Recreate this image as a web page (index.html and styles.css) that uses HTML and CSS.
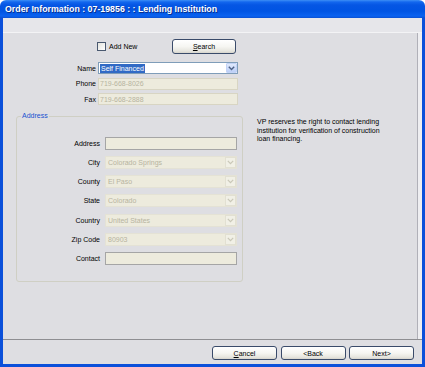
FILE: index.html
```html
<!DOCTYPE html>
<html>
<head>
<meta charset="utf-8">
<link rel="stylesheet" href="styles.css">
</head>
<body>
<div class="window">
  <div class="titlebar"><span class="title">Order Information : 07-19856 : : Lending Institution</span></div>
  <div class="frame">
    <div class="band"></div>
    <div class="content">
      <div class="top-form">
        <span></span>
        <div class="toprow">
          <label class="check"><span class="box"></span>Add New</label>
          <button class="btn search"><u>S</u>earch</button>
        </div>
        <span class="lbl">Name</span>
        <div class="combo active">
          <span class="sel">Self Financed</span>
          <span class="drop"><svg width="7" height="5" viewBox="0 0 7 5"><polyline points="0.8,0.8 3.5,3.6 6.2,0.8" fill="none" stroke="#4d6185" stroke-width="1.4"/></svg></span>
        </div>
        <span class="lbl">Phone</span>
        <div class="field dis">719-668-8026</div>
        <span class="lbl">Fax</span>
        <div class="field dis">719-668-2888</div>
      </div>
      <div class="lower">
        <fieldset class="group">
          <legend>Address</legend>
          <div class="group-grid">
            <span class="lbl">Address</span>
            <div class="field edit"></div>
            <span class="lbl">City</span>
            <div class="combo dis"><span class="val">Colorado Springs</span><span class="drop"><svg width="7" height="5" viewBox="0 0 7 5"><polyline points="0.8,0.8 3.5,3.6 6.2,0.8" fill="none" stroke="#c9c7b8" stroke-width="1.2"/></svg></span></div>
            <span class="lbl">County</span>
            <div class="combo dis"><span class="val">El Paso</span><span class="drop"><svg width="7" height="5" viewBox="0 0 7 5"><polyline points="0.8,0.8 3.5,3.6 6.2,0.8" fill="none" stroke="#c9c7b8" stroke-width="1.2"/></svg></span></div>
            <span class="lbl">State</span>
            <div class="combo dis"><span class="val">Colorado</span><span class="drop"><svg width="7" height="5" viewBox="0 0 7 5"><polyline points="0.8,0.8 3.5,3.6 6.2,0.8" fill="none" stroke="#c9c7b8" stroke-width="1.2"/></svg></span></div>
            <span class="lbl">Country</span>
            <div class="combo dis"><span class="val">United States</span><span class="drop"><svg width="7" height="5" viewBox="0 0 7 5"><polyline points="0.8,0.8 3.5,3.6 6.2,0.8" fill="none" stroke="#c9c7b8" stroke-width="1.2"/></svg></span></div>
            <span class="lbl">Zip Code</span>
            <div class="combo dis"><span class="val">80903</span><span class="drop"><svg width="7" height="5" viewBox="0 0 7 5"><polyline points="0.8,0.8 3.5,3.6 6.2,0.8" fill="none" stroke="#c9c7b8" stroke-width="1.2"/></svg></span></div>
            <span class="lbl">Contact</span>
            <div class="field edit"></div>
          </div>
        </fieldset>
        <p class="note">VP reserves the right to contact lending<br>institution for verification of construction<br>loan financing.</p>
      </div>
    </div>
    <div class="footer">
      <button class="btn"><u>C</u>ancel</button>
      <button class="btn">&lt;Back</button>
      <button class="btn">Next&gt;</button>
    </div>
  </div>
</div>
</body>
</html>
```

FILE: styles.css
```css
html, body {
  margin: 0;
  padding: 0;
}
body {
  width: 425px;
  height: 367px;
  overflow: hidden;
  font-family: "Liberation Sans", Arial, sans-serif;
  font-size: 7px;
  color: #000;
  background: #fff;
}
.window {
  width: 425px;
  height: 367px;
  display: flex;
  flex-direction: column;
}
.titlebar {
  height: 18px;
  flex: none;
  border-radius: 6px 6px 0 0;
  background: linear-gradient(180deg, #3d8ff5 0px, #1367ee 2px, #0556e4 5px, #0054e3 11px, #0a62f0 16px, #0a50d2 18px);
  display: flex;
  align-items: center;
  padding-left: 5px;
}
.title {
  color: #fff;
  font-weight: bold;
  font-size: 8.8px;
  text-shadow: 1px 1px 0 #0a2f8c;
  white-space: nowrap;
}
.frame {
  flex: 1;
  display: flex;
  flex-direction: column;
  border: 3px solid #0b50da;
  border-top: 0;
  background: #eeeef1;
  min-height: 0;
}
.band {
  height: 14px;
  flex: none;
  background: #e6e6ea;
  border-bottom: 1px solid #f3f3f5;
}
.content {
  flex: 1;
  background: #dedee2;
  margin-right: 4px;
  border-right: 1px solid #b0b0b8;
  padding-top: 6px;
  min-height: 0;
}
.top-form {
  display: grid;
  grid-template-columns: 93px 140px;
  grid-template-rows: 19.5px 12px 12px 12px;
  column-gap: 2px;
  row-gap: 3.5px;
  align-items: center;
}
.toprow {
  align-self: start;
  display: flex;
  align-items: center;
  justify-content: space-between;
  height: 15px;
  padding-right: 2px;
}
.check {
  display: flex;
  align-items: center;
  gap: 3px;
  margin-left: -1px;
}
.box {
  width: 7px;
  height: 7px;
  border: 1px solid #4a5970;
  background: linear-gradient(135deg, #e4e4de, #ffffff);
}
.lbl {
  text-align: right;
  white-space: nowrap;
}
.btn {
  font-family: "Liberation Sans", Arial, sans-serif;
  font-size: 7px;
  color: #000;
  width: 65px;
  height: 14px;
  padding: 0;
  border: 1px solid #3a4b6a;
  border-radius: 3px;
  background: linear-gradient(180deg, #ffffff 0%, #f6f6f2 50%, #e6e5de 85%, #d6d4cc 100%);
  box-sizing: border-box;
}
.search {
  width: 64px;
  height: 15px;
}
.combo, .field {
  height: 12px;
  box-sizing: border-box;
  display: flex;
  align-items: center;
  position: relative;
  white-space: nowrap;
}
.combo.active {
  background: #fff;
  border: 1px solid #7f9db9;
}
.sel {
  background: #316ac5;
  color: #fff;
  margin-left: 1px;
  padding: 0 1px;
  line-height: 9px;
}
.drop {
  margin-left: auto;
  width: 11px;
  height: 100%;
  display: flex;
  align-items: center;
  justify-content: center;
  box-sizing: border-box;
}
.combo.active .drop {
  background: linear-gradient(180deg, #e0e9fc, #bccff7);
  border: 1px solid #c3d3f6;
  border-radius: 1px;
}
.field.dis {
  background: #edebdd;
  border: 1px solid #d8d5c3;
  color: #b7b49f;
  padding-left: 1px;
}
.lower {
  display: flex;
  align-items: flex-start;
  margin-top: 7px;
}
.group {
  margin: 0 0 0 13px;
  width: 227px;
  box-sizing: border-box;
  border: 1px solid #cfcfc4;
  border-radius: 3px;
  padding: 17px 4px 16px 0;
  min-width: 0;
}
.group legend {
  color: #1750d0;
  font-size: 7px;
  line-height: 8px;
  padding: 0 1px;
  margin-left: 4px;
}
.group-grid {
  display: grid;
  grid-template-columns: 83px 132px;
  grid-auto-rows: 13px;
  column-gap: 5px;
  row-gap: 6.17px;
  align-items: center;
}
.group-grid .combo, .group-grid .field {
  height: 13px;
}
.field.edit {
  background: #edebdd;
  border: 1px solid #a5a5a5;
}
.combo.dis {
  background: #edebdd;
  border: 1px solid #e4e2d5;
  color: #b7b49f;
}
.combo.dis .val {
  padding-left: 2px;
}
.combo.dis .drop {
  border: 1px solid #e2e0d2;
  background: #f1f0e6;
}
.note {
  margin: 6px 0 0 14px;
  line-height: 8.5px;
  white-space: nowrap;
}
.footer {
  height: 18px;
  flex: none;
  background: #dedee2;
  border-top: 1px solid #8e8e92;
  display: flex;
  justify-content: flex-end;
  align-items: flex-start;
  gap: 3.5px;
  padding: 6px 8px 0 0;
  box-sizing: content-box;
}
```
